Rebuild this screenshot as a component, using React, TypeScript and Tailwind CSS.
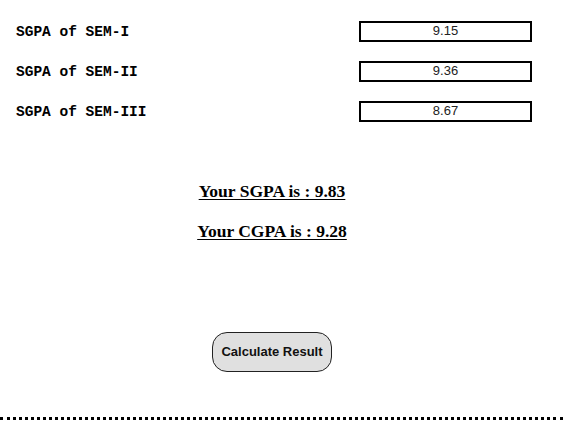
const rows = [
  { label: "SGPA of SEM-I", value: "9.15" },
  { label: "SGPA of SEM-II", value: "9.36" },
  { label: "SGPA of SEM-III", value: "8.67" },
];

export default function App() {
  return (
    <div className="w-[563px] h-[420px] bg-white border-b-[3px] border-dotted border-black flex flex-col">
      {/* Semester inputs */}
      <div className="pt-[11px] pl-[16px] pr-[31px] flex flex-col">
        {rows.map((r) => (
          <div key={r.label} className="h-10 flex items-center justify-between">
            <span className="pt-[3px] font-['Liberation_Mono',monospace] font-bold text-[14.5px] text-black">
              {r.label}
            </span>
            <div className="w-[173px] h-[21px] border-2 border-black flex items-center justify-center font-['Liberation_Sans',Arial,sans-serif] text-[13px] text-[#222]">
              {r.value}
            </div>
          </div>
        ))}
      </div>

      {/* Results */}
      <div className="w-[544px] mt-[50px] flex flex-col items-center gap-5 font-['Liberation_Serif','Times_New_Roman',serif] font-bold text-[17.5px] leading-5 text-black">
        <span className="underline underline-offset-2">Your SGPA is : 9.83</span>
        <span className="underline underline-offset-2">Your CGPA is : 9.28</span>
      </div>

      <div className="w-[544px] mt-[91px] flex justify-center">
        <button className="w-[120px] h-10 rounded-[15px] border border-[#222] bg-[#e0e0e0] font-['Liberation_Sans',Arial,sans-serif] font-bold text-[13px] text-[#111]">
          Calculate Result
        </button>
      </div>
    </div>
  );
}
